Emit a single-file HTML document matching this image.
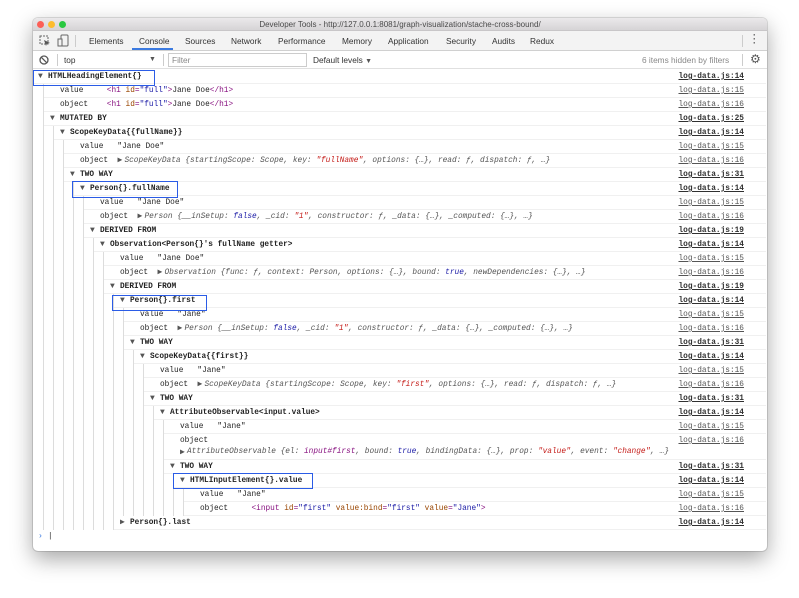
<!DOCTYPE html>
<html><head><meta charset="utf-8"><style>
*{margin:0;padding:0;box-sizing:border-box}
body{width:799px;height:598px;background:#fff;position:relative;overflow:hidden;font-family:"Liberation Sans",sans-serif}
.win{position:absolute;left:33px;top:18px;width:734px;height:533px;background:#fff;border-radius:5px;box-shadow:0 8px 22px rgba(0,0,0,.35),0 0 0 1px rgba(0,0,0,.12);overflow:hidden}
.title{position:absolute;left:0;top:0;width:734px;height:13px;background:linear-gradient(#ebe9eb,#d6d4d6);border-bottom:1px solid #c8c6c8;font-size:8px;color:#4a4a4a;text-align:center;line-height:13px}
.dot{position:absolute;top:3px;width:7px;height:7px;border-radius:50%}
.tabs{position:absolute;left:0;top:13px;width:734px;height:20px;background:#f3f3f3;border-bottom:1px solid #d0d0d0;font-size:8.3px;color:#333}
.tabs span{position:absolute;top:5px}
.fbar{position:absolute;left:0;top:33px;width:734px;height:18px;background:#fff;border-bottom:1px solid #e0e0e0;font-size:8.3px;color:#333}
.fbar span{position:absolute;top:4px}
.sep{position:absolute;width:1px;background:#ccc}
.c{position:absolute;left:0;top:0;width:799px;height:598px;font-family:"Liberation Mono",monospace;font-size:7.8px;color:#222}
.r{position:absolute;right:33px;height:14px;line-height:14px;white-space:pre;border-bottom:1px solid #f0f0f0}
.s{position:absolute;right:22px;top:0;text-decoration:underline;color:#555}
.b{font-weight:bold;color:#303030}
.t{font-size:8px;color:#555;display:inline-block;width:10px;vertical-align:top;line-height:13px}
.g{position:absolute;width:1px;background:#dcdcdc}
.box{position:absolute;border:1.5px solid #2b5ce6}
.tg{color:#881280}.an{color:#994500}.av{color:#1a1aa6}
.pv{font-style:italic;color:#555}.st{color:#c41a16}.kw{color:#1a1aa6}
</style></head><body>
<div class="win">
<div class="title">Developer Tools - http://127.0.0.1:8081/graph-visualization/stache-cross-bound/
<div class="dot" style="left:4px;background:#fc5f57"></div><div class="dot" style="left:15px;background:#fdbc2e"></div><div class="dot" style="left:26px;background:#29c840"></div></div>
<div class="tabs">
<svg style="position:absolute;left:6px;top:4px" width="12" height="12"><rect x="1" y="1" width="8" height="8" fill="none" stroke="#666" stroke-dasharray="2 1"/><path d="M5 5 L11 8 L8 8.5 L7 11 Z" fill="#555"/></svg>
<svg style="position:absolute;left:24px;top:3px" width="12" height="13"><rect x="4" y="1" width="7" height="11" rx="1" fill="none" stroke="#666"/><rect x="1" y="5" width="4" height="7" fill="#f3f3f3" stroke="#666"/></svg>
<div class="sep" style="left:42px;top:4px;height:12px"></div>
<span style="left:56px">Elements</span><span style="left:106px">Console</span><span style="left:152px">Sources</span><span style="left:198px">Network</span><span style="left:245px">Performance</span><span style="left:309px">Memory</span><span style="left:355px">Application</span><span style="left:413px">Security</span><span style="left:459px">Audits</span><span style="left:497px">Redux</span>
<div style="position:absolute;left:99px;top:17px;width:41px;height:2px;background:#3b7ae0"></div>
<div class="sep" style="left:709px;top:4px;height:12px"></div>
<span style="left:720px;top:2px;font-weight:bold;color:#555;font-size:9px;line-height:4px">·<br>·<br>·</span>
</div>
<div class="fbar">
<svg style="position:absolute;left:6px;top:4px" width="10" height="10"><circle cx="5" cy="5" r="4" fill="none" stroke="#555" stroke-width="1.3"/><path d="M2.2 2.2 L7.8 7.8" stroke="#555" stroke-width="1.3"/></svg>
<div class="sep" style="left:24px;top:3px;height:12px"></div>
<span style="left:31px">top</span><span style="left:116px;font-size:7px;top:5px;color:#555">▼</span>
<div class="sep" style="left:130px;top:3px;height:12px"></div>
<div style="position:absolute;left:135px;top:2px;width:139px;height:14px;border:1px solid #ccc"></div>
<span style="left:139px;color:#888">Filter</span>
<span style="left:280px">Default levels <span style="position:static;font-size:7px;color:#555">▼</span></span>
<span style="left:609px;color:#888">6 items hidden by filters</span>
<div class="sep" style="left:709px;top:3px;height:12px"></div>
<span style="left:717px;top:1px;font-size:12px;color:#555">⚙</span>
</div>
</div>
<div class="c">
<div class="g" style="left:43px;top:84px;height:446px"></div>
<div class="g" style="left:53px;top:126px;height:404px"></div>
<div class="g" style="left:63px;top:140px;height:390px"></div>
<div class="g" style="left:73px;top:182px;height:348px"></div>
<div class="g" style="left:83px;top:196px;height:334px"></div>
<div class="g" style="left:93px;top:238px;height:292px"></div>
<div class="g" style="left:103px;top:252px;height:278px"></div>
<div class="g" style="left:113px;top:294px;height:236px"></div>
<div class="g" style="left:123px;top:308px;height:208px"></div>
<div class="g" style="left:133px;top:350px;height:166px"></div>
<div class="g" style="left:143px;top:364px;height:152px"></div>
<div class="g" style="left:153px;top:406px;height:110px"></div>
<div class="g" style="left:163px;top:420px;height:96px"></div>
<div class="g" style="left:173px;top:474px;height:42px"></div>
<div class="g" style="left:183px;top:488px;height:28px"></div>

<div class="r" style="top:70px;left:33px;padding-left:5px"><span class="t">▼</span><b>HTMLHeadingElement{}</b><span class="s b">log-data.js:14</span></div>
<div class="r" style="top:84px;left:44px;padding-left:16px">value     <span class="tg">&lt;h1 </span><span class="an">id</span><span class="tg">=</span><span class="av">"full"</span><span class="tg">&gt;</span>Jane Doe<span class="tg">&lt;/h1&gt;</span><span class="s">log-data.js:15</span></div>
<div class="r" style="top:98px;left:44px;padding-left:16px">object    <span class="tg">&lt;h1 </span><span class="an">id</span><span class="tg">=</span><span class="av">"full"</span><span class="tg">&gt;</span>Jane Doe<span class="tg">&lt;/h1&gt;</span><span class="s">log-data.js:16</span></div>
<div class="r" style="top:112px;left:44px;padding-left:6px"><span class="t">▼</span><b>MUTATED BY</b><span class="s b">log-data.js:25</span></div>
<div class="r" style="top:126px;left:54px;padding-left:6px"><span class="t">▼</span><b>ScopeKeyData{{fullName}}</b><span class="s b">log-data.js:14</span></div>
<div class="r" style="top:140px;left:64px;padding-left:16px">value   "Jane Doe"<span class="s">log-data.js:15</span></div>
<div class="r" style="top:154px;left:64px;padding-left:16px">object  <span class="t" style="width:7px">▶</span><span class="pv">ScopeKeyData {startingScope: Scope, key: <span class="st">"fullName"</span>, options: {…}, read: ƒ, dispatch: ƒ, …}</span><span class="s">log-data.js:16</span></div>
<div class="r" style="top:168px;left:64px;padding-left:6px"><span class="t">▼</span><b>TWO WAY</b><span class="s b">log-data.js:31</span></div>
<div class="r" style="top:182px;left:74px;padding-left:6px"><span class="t">▼</span><b>Person{}.fullName</b><span class="s b">log-data.js:14</span></div>
<div class="r" style="top:196px;left:84px;padding-left:16px">value   "Jane Doe"<span class="s">log-data.js:15</span></div>
<div class="r" style="top:210px;left:84px;padding-left:16px">object  <span class="t" style="width:7px">▶</span><span class="pv">Person {__inSetup: <span class="kw">false</span>, _cid: <span class="st">"1"</span>, constructor: ƒ, _data: {…}, _computed: {…}, …}</span><span class="s">log-data.js:16</span></div>
<div class="r" style="top:224px;left:84px;padding-left:6px"><span class="t">▼</span><b>DERIVED FROM</b><span class="s b">log-data.js:19</span></div>
<div class="r" style="top:238px;left:94px;padding-left:6px"><span class="t">▼</span><b>Observation&lt;Person{}'s fullName getter&gt;</b><span class="s b">log-data.js:14</span></div>
<div class="r" style="top:252px;left:104px;padding-left:16px">value   "Jane Doe"<span class="s">log-data.js:15</span></div>
<div class="r" style="top:266px;left:104px;padding-left:16px">object  <span class="t" style="width:7px">▶</span><span class="pv">Observation {func: ƒ, context: Person, options: {…}, bound: <span class="kw">true</span>, newDependencies: {…}, …}</span><span class="s">log-data.js:16</span></div>
<div class="r" style="top:280px;left:104px;padding-left:6px"><span class="t">▼</span><b>DERIVED FROM</b><span class="s b">log-data.js:19</span></div>
<div class="r" style="top:294px;left:114px;padding-left:6px"><span class="t">▼</span><b>Person{}.first</b><span class="s b">log-data.js:14</span></div>
<div class="r" style="top:308px;left:124px;padding-left:16px">value   "Jane"<span class="s">log-data.js:15</span></div>
<div class="r" style="top:322px;left:124px;padding-left:16px">object  <span class="t" style="width:7px">▶</span><span class="pv">Person {__inSetup: <span class="kw">false</span>, _cid: <span class="st">"1"</span>, constructor: ƒ, _data: {…}, _computed: {…}, …}</span><span class="s">log-data.js:16</span></div>
<div class="r" style="top:336px;left:124px;padding-left:6px"><span class="t">▼</span><b>TWO WAY</b><span class="s b">log-data.js:31</span></div>
<div class="r" style="top:350px;left:134px;padding-left:6px"><span class="t">▼</span><b>ScopeKeyData{{first}}</b><span class="s b">log-data.js:14</span></div>
<div class="r" style="top:364px;left:144px;padding-left:16px">value   "Jane"<span class="s">log-data.js:15</span></div>
<div class="r" style="top:378px;left:144px;padding-left:16px">object  <span class="t" style="width:7px">▶</span><span class="pv">ScopeKeyData {startingScope: Scope, key: <span class="st">"first"</span>, options: {…}, read: ƒ, dispatch: ƒ, …}</span><span class="s">log-data.js:16</span></div>
<div class="r" style="top:392px;left:144px;padding-left:6px"><span class="t">▼</span><b>TWO WAY</b><span class="s b">log-data.js:31</span></div>
<div class="r" style="top:406px;left:154px;padding-left:6px"><span class="t">▼</span><b>AttributeObservable&lt;input.value&gt;</b><span class="s b">log-data.js:14</span></div>
<div class="r" style="top:420px;left:164px;padding-left:16px">value   "Jane"<span class="s">log-data.js:15</span></div>
<div class="r" style="top:434px;left:164px;padding-left:16px;height:26px;line-height:11px;padding-top:2px">object
<span class="t" style="width:7px;line-height:11px">▶</span><span class="pv">AttributeObservable {el: <span class="tg">input#first</span>, bound: <span class="kw">true</span>, bindingData: {…}, prop: <span class="st">"value"</span>, event: <span class="st">"change"</span>, …}</span><span class="s" style="top:2px">log-data.js:16</span></div>
<div class="r" style="top:460px;left:164px;padding-left:6px"><span class="t">▼</span><b>TWO WAY</b><span class="s b">log-data.js:31</span></div>
<div class="r" style="top:474px;left:174px;padding-left:6px"><span class="t">▼</span><b>HTMLInputElement{}.value</b><span class="s b">log-data.js:14</span></div>
<div class="r" style="top:488px;left:184px;padding-left:16px">value   "Jane"<span class="s">log-data.js:15</span></div>
<div class="r" style="top:502px;left:184px;padding-left:16px">object     <span class="tg">&lt;input </span><span class="an">id</span><span class="tg">=</span><span class="av">"first"</span> <span class="an">value:bind</span><span class="tg">=</span><span class="av">"first"</span> <span class="an">value</span><span class="tg">=</span><span class="av">"Jane"</span><span class="tg">&gt;</span><span class="s">log-data.js:16</span></div>
<div class="r" style="top:516px;left:114px;padding-left:6px"><span class="t">▶</span><b>Person{}.last</b><span class="s b">log-data.js:14</span></div>
<div style="position:absolute;left:38px;top:531px;line-height:12px;color:#3b7ae0;font-size:8px">›<span style="color:#333;margin-left:5px">|</span></div>

<div class="box" style="left:33px;top:70px;width:122px;height:16px"></div>
<div class="box" style="left:72px;top:181px;width:106px;height:17px"></div>
<div class="box" style="left:112px;top:295px;width:95px;height:16px"></div>
<div class="box" style="left:173px;top:473px;width:140px;height:16px"></div>
</div>
</body></html>
